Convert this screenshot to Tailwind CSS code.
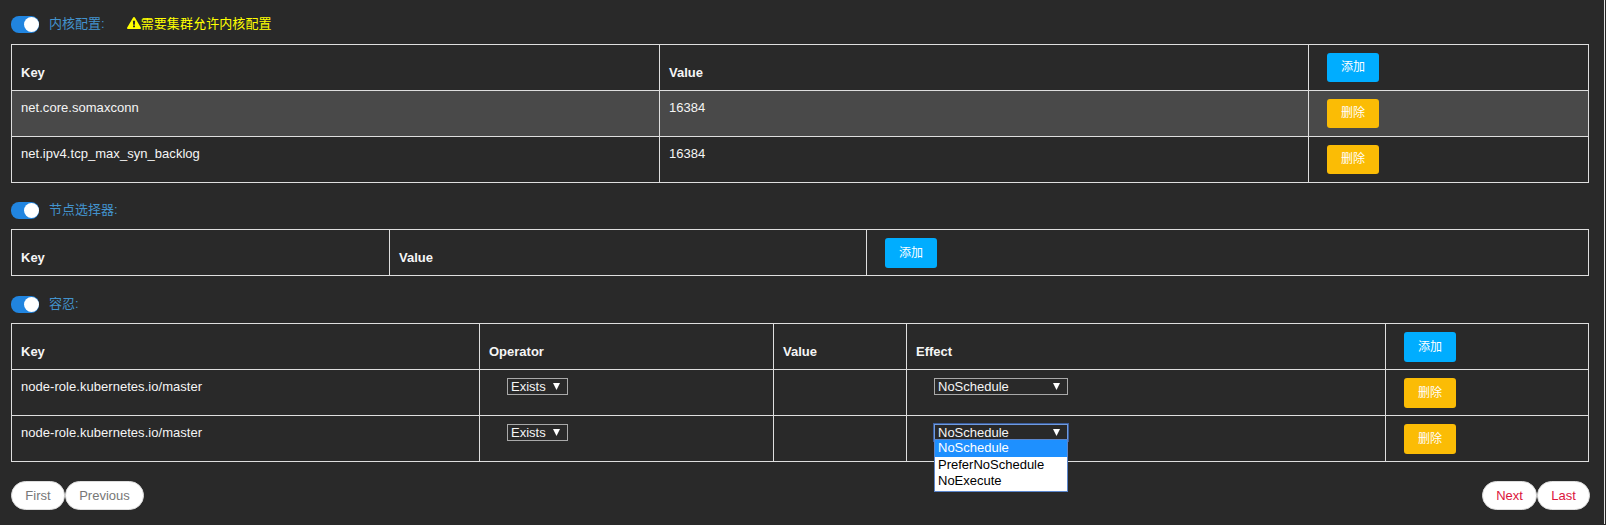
<!DOCTYPE html>
<html lang="zh">
<head>
<meta charset="utf-8">
<title>Pod</title>
<script src="https://cdn.jsdelivr.net/npm/@tailwindcss/browser@4"></script>
</head>
<body class="h-[525px] w-[1606px] overflow-hidden bg-[#292929] font-['Liberation_Sans','Noto_Sans_CJK_SC',sans-serif] text-[13px] leading-[18px] text-[#f5f5f5]">
<main class="flex h-[524px] w-[1605px] flex-col border-r border-[#e4e4e4] pl-[11px] pr-[15px] pt-[15px]">

  <header class="flex h-[29px] items-start">
    <span class="mt-px flex h-[17px] w-7 justify-end rounded-[8px] bg-[#2185e0] py-px"><i class="size-[15px] rounded-full bg-white"></i></span>
    <span class="ml-[10px] text-[#4393cd]">内核配置:</span>
    <span class="ml-[22px] flex tracking-[0.1px] text-[#ffff00]">
      <svg class="mt-[2px] h-3 w-[14px]" viewBox="0 0 14 13" preserveAspectRatio="none"><path fill="#ffff00" fill-rule="evenodd" d="M6.1.6a1 1 0 0 1 1.8 0l5.9 10.8a1 1 0 0 1-.9 1.6H1.1a1 1 0 0 1-.9-1.6zM5.9 4l.2 4.5h1.8L8.1 4zM6 9.3v1.8h2V9.3z"/></svg>需要集群允许内核配置</span>
  </header>
  <table class="w-[1578px] table-fixed border-collapse text-left [&_td]:border [&_td]:border-[#dedede] [&_td]:pl-[9px] [&_td]:pt-2 [&_td]:align-top [&_td]:tracking-[0.04px] [&_th]:border [&_th]:border-[#dedede] [&_th]:pl-[9px] [&_th]:pb-2 [&_th]:align-bottom [&_tr]:h-[46px]">
    <colgroup><col class="w-[648px]"><col class="w-[649px]"><col></colgroup>
    <tr><th>Key</th><th>Value</th><td><button class="ml-[9px] block h-[29px] w-[52px] rounded-[3px] bg-[#00adff] pb-px text-xs text-white">添加</button></td></tr>
    <tr class="bg-[#494949]"><td>net.core.somaxconn</td><td>16384</td><td><button class="ml-[9px] block h-[29px] w-[52px] rounded-[3px] bg-[#fbbc05] pb-px text-xs text-white">删除</button></td></tr>
    <tr><td>net.ipv4.tcp_max_syn_backlog</td><td>16384</td><td><button class="ml-[9px] block h-[29px] w-[52px] rounded-[3px] bg-[#fbbc05] pb-px text-xs text-white">删除</button></td></tr>
  </table>

  <header class="mt-[18px] flex h-7 items-start">
    <span class="mt-px flex h-[17px] w-7 justify-end rounded-[8px] bg-[#2185e0] py-px"><i class="size-[15px] rounded-full bg-white"></i></span>
    <span class="ml-[10px] text-[#4393cd]">节点选择器:</span>
  </header>
  <table class="w-[1578px] table-fixed border-collapse text-left [&_td]:border [&_td]:border-[#dedede] [&_td]:pl-[9px] [&_td]:pt-2 [&_td]:align-top [&_td]:tracking-[0.04px] [&_th]:border [&_th]:border-[#dedede] [&_th]:pl-[9px] [&_th]:pb-2 [&_th]:align-bottom [&_tr]:h-[46px]">
    <colgroup><col class="w-[378px]"><col class="w-[477px]"><col></colgroup>
    <tr><th>Key</th><th>Value</th><td><button class="ml-[9px] block h-[30px] w-[52px] rounded-[3px] bg-[#00adff] pb-px text-xs text-white">添加</button></td></tr>
  </table>

  <header class="mt-[19px] flex h-7 items-start">
    <span class="mt-px flex h-[17px] w-7 justify-end rounded-[8px] bg-[#2185e0] py-px"><i class="size-[15px] rounded-full bg-white"></i></span>
    <span class="ml-[10px] text-[#4393cd]">容忍:</span>
  </header>
  <table class="w-[1578px] table-fixed border-collapse text-left [&_td]:border [&_td]:border-[#dedede] [&_td]:pl-[9px] [&_td]:pt-2 [&_td]:align-top [&_td]:tracking-[0.04px] [&_th]:border [&_th]:border-[#dedede] [&_th]:pl-[9px] [&_th]:pb-2 [&_th]:align-bottom [&_tr]:h-[46px]">
    <colgroup><col class="w-[468px]"><col class="w-[294px]"><col class="w-[133px]"><col class="w-[479px]"><col></colgroup>
    <tr><th>Key</th><th>Operator</th><th>Value</th><th>Effect</th><td><button class="ml-[9px] block h-[30px] w-[52px] rounded-[3px] bg-[#00adff] pb-px text-xs text-white">添加</button></td></tr>
    <tr><td>node-role.kubernetes.io/master</td>
      <td><div class="ml-[18px] flex h-[17px] w-[61px] items-center justify-between border border-[#a9a9a9] pl-[3px] pr-[7px] leading-[15px] tracking-normal">Exists<svg class="h-[7px] w-[7px]" viewBox="0 0 7 7"><path fill="#fff" d="M0 0h7L3.5 7z"/></svg></div></td>
      <td></td>
      <td><div class="ml-[18px] flex h-[17px] w-[134px] items-center justify-between border border-[#a9a9a9] pl-[3px] pr-[7px] leading-[15px] tracking-normal">NoSchedule<svg class="h-[7px] w-[7px]" viewBox="0 0 7 7"><path fill="#fff" d="M0 0h7L3.5 7z"/></svg></div></td>
      <td><button class="ml-[9px] block h-[30px] w-[52px] rounded-[3px] bg-[#fbbc05] pb-px text-xs text-white">删除</button></td></tr>
    <tr><td>node-role.kubernetes.io/master</td>
      <td><div class="ml-[18px] flex h-[17px] w-[61px] items-center justify-between border border-[#a9a9a9] pl-[3px] pr-[7px] leading-[15px] tracking-normal">Exists<svg class="h-[7px] w-[7px]" viewBox="0 0 7 7"><path fill="#fff" d="M0 0h7L3.5 7z"/></svg></div></td>
      <td></td>
      <td><div class="relative ml-[18px] flex h-[17px] w-[134px] items-center justify-between border border-[#6f9ae0] pl-[3px] pr-[7px] leading-[15px] tracking-normal ring-1 ring-[#3c5f9e]">NoSchedule<svg class="h-[7px] w-[7px]" viewBox="0 0 7 7"><path fill="#fff" d="M0 0h7L3.5 7z"/></svg>
        <ul class="absolute -left-px top-[14px] h-[53px] w-[134px] border border-[#5b86cc] bg-white text-black"><li class="h-[17px] bg-[#1e90ff] pl-[3px] text-white">NoSchedule</li><li class="h-4 pl-[3px]">PreferNoSchedule</li><li class="h-4 pl-[3px]">NoExecute</li></ul></div></td>
      <td><button class="ml-[9px] block h-[30px] w-[52px] rounded-[3px] bg-[#fbbc05] pb-px text-xs text-white">删除</button></td></tr>
  </table>

  <nav class="mt-[19px] flex h-[29px] w-[1579px]">
    <button class="w-[54px] rounded-full border border-[#ddd] bg-white text-[#777]">First</button>
    <button class="w-[79px] rounded-full border border-[#ddd] bg-white text-[#777]">Previous</button>
    <button class="ml-auto w-[55px] rounded-full border border-[#ddd] bg-white text-[#dc143c]">Next</button>
    <button class="w-[53px] rounded-full border border-[#ddd] bg-white text-[#dc143c]">Last</button>
  </nav>
</main>
</body>
</html>
